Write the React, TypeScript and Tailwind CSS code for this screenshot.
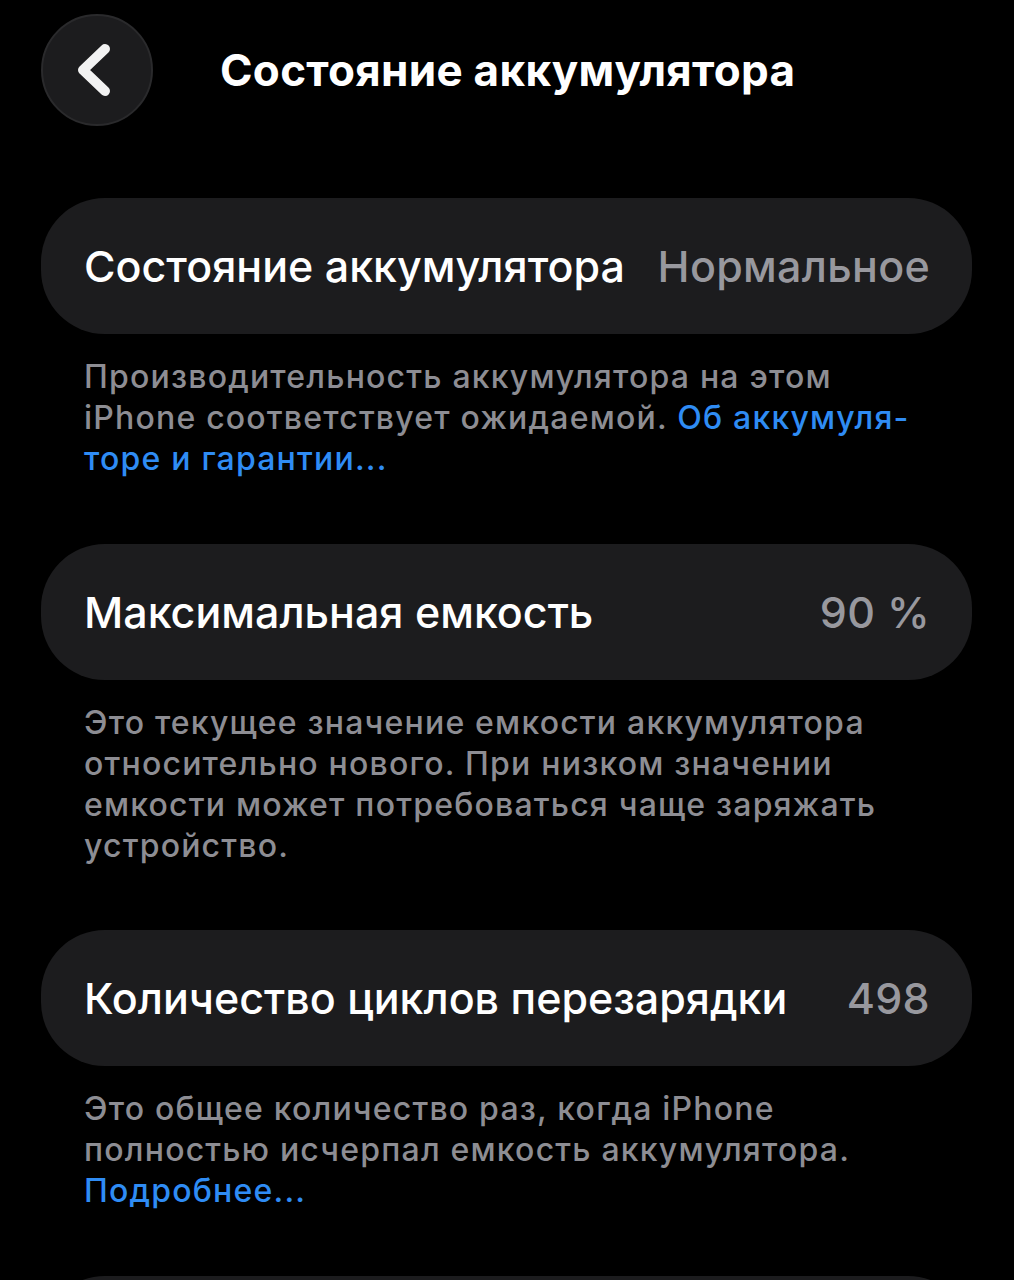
import { ReactNode } from 'react';

const font = { fontFamily: 'Inter, "Noto Sans", "Liberation Sans", sans-serif' };

function BackButton() {
    return (
        <button className="flex h-[112px] w-[112px] shrink-0 items-center justify-center rounded-full border-2 border-[#2a2a2c] bg-[#1c1c1e]">
            <svg className="h-[56px] w-[56px]" viewBox="0 0 56 56" fill="none" stroke="#f2f2f2" strokeWidth={10} strokeLinecap="round" strokeLinejoin="round">
                <path d="M36 7L14 28l22 21" />
            </svg>
        </button>
    );
}

function Row({ label, value }: { label: string; value: string }) {
    return (
        <div className="flex h-[136px] items-center justify-between rounded-[64px] bg-[#1c1c1e] pl-[43px] pr-[42px]">
            <span className="text-[43px] font-medium text-white">{label}</span>
            <span className="text-[43px] font-medium tracking-[0.3px] text-[#98989e]">{value}</span>
        </div>
    );
}

function Note({ children }: { children: ReactNode }) {
    return (
        <p className="mt-[22px] whitespace-nowrap px-[43px] text-[32px] font-medium leading-[41px] tracking-[1.2px] text-[#8d8d93]">
            {children}
        </p>
    );
}

function Link({ children }: { children: ReactNode }) {
    return <span className="text-[#2f8cf4]">{children}</span>;
}

export default function App() {
    return (
        <div className="h-[1280px] w-[1014px] overflow-hidden bg-black" style={font}>
            <header className="flex h-[198px] items-start pl-[41px] pt-[14px]">
                <BackButton />
                <h1 className="ml-[67px] flex h-[112px] items-center text-[44px] font-bold tracking-[0.3px] text-white">
                    Состояние аккумулятора
                </h1>
            </header>

            <div className="mx-[41px] w-[931px]">
                <section className="mb-[65px]">
                    <Row label="Состояние аккумулятора" value="Нормальное" />
                    <Note>
                        Производительность аккумулятора на этом
                        <br />
                        iPhone соответствует ожидаемой. <Link>Об аккумуля-</Link>
                        <br />
                        <Link>торе и гарантии...</Link>
                    </Note>
                </section>

                <section className="mb-[64px]">
                    <Row label="Максимальная емкость" value="90 %" />
                    <Note>
                        Это текущее значение емкости аккумулятора
                        <br />
                        относительно нового. При низком значении
                        <br />
                        емкости может потребоваться чаще заряжать
                        <br />
                        устройство.
                    </Note>
                </section>

                <section className="mb-[65px]">
                    <Row label="Количество циклов перезарядки" value="498" />
                    <Note>
                        Это общее количество раз, когда iPhone
                        <br />
                        полностью исчерпал емкость аккумулятора.
                        <br />
                        <Link>Подробнее...</Link>
                    </Note>
                </section>

                <div className="h-[136px] rounded-[64px] bg-[#1c1c1e]" />
            </div>
        </div>
    );
}
